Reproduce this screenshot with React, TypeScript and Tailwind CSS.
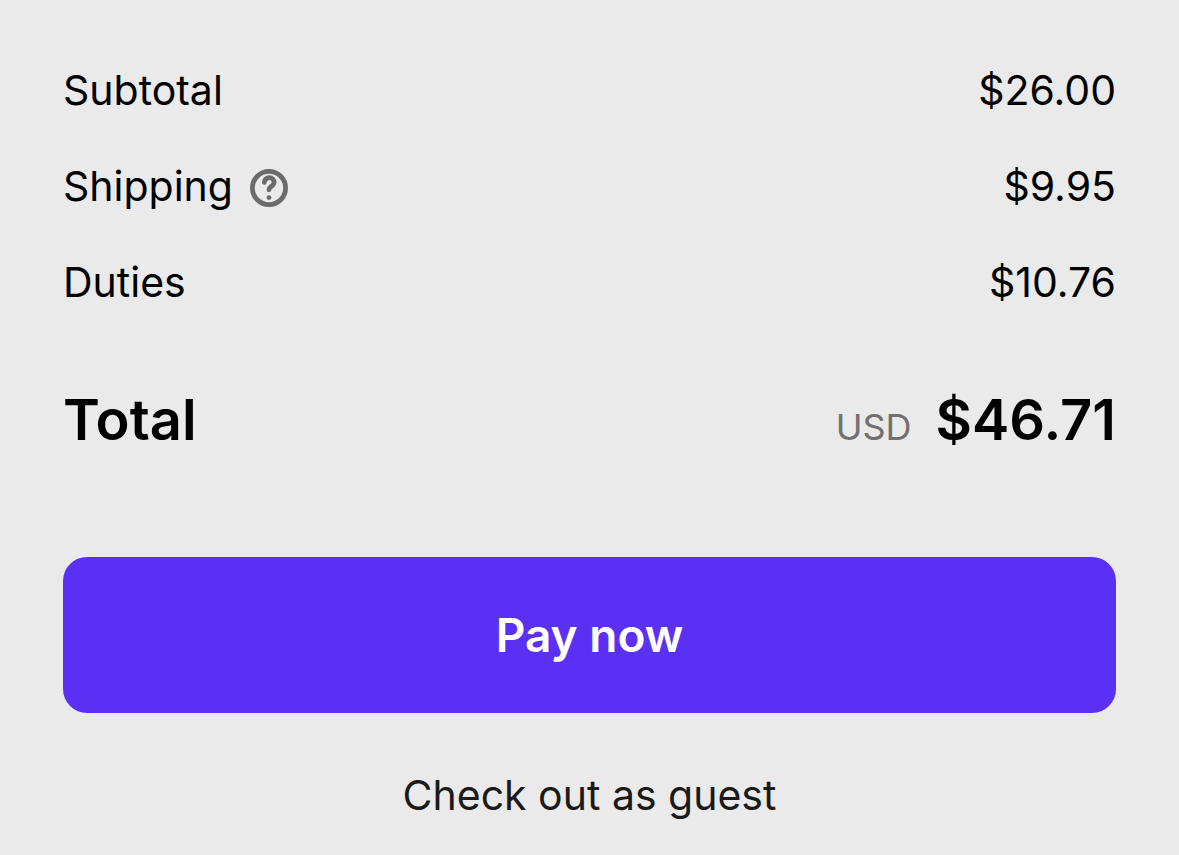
import React from 'react';

const lines = [
  { label: 'Subtotal', amount: '$26.00' },
  { label: 'Shipping', amount: '$9.95', help: true },
  { label: 'Duties', amount: '$10.76' },
];

function HelpIcon() {
  return (
    <svg viewBox="0 0 40 40" className="w-10 h-10" fill="none" stroke="#6b6b6b" strokeLinecap="round" strokeLinejoin="round" aria-hidden="true">
      <circle cx="20" cy="20" r="16.6" strokeWidth="4.8" />
      <path d="M15.3 14.4c.2-2.9 2.2-4.8 4.9-4.8 2.8 0 4.9 2 4.9 4.7 0 2.3-1.3 3.2-2.9 4.3-1.4 1-2.2 1.7-2.2 3.2" strokeWidth="4.8" />
      <circle cx="20" cy="29.6" r="2.4" fill="#6b6b6b" stroke="none" />
    </svg>
  );
}

export default function App() {
  return (
    <div className="min-h-screen bg-[#eaeaea] px-[63px] pt-15 pb-7 font-['Inter',sans-serif] text-black">
      <dl className="space-y-9 text-[41px] leading-[60px]">
        {lines.map((line) => (
          <div key={line.label} className="flex items-center justify-between">
            <dt className="flex items-center gap-4">
              {line.label}
              {line.help && (
                <button type="button" aria-label="Shipping information" className="pt-1">
                  <HelpIcon />
                </button>
              )}
            </dt>
            <dd>{line.amount}</dd>
          </div>
        ))}
      </dl>

      <div className="mt-17 flex items-baseline justify-between leading-[80px]">
        <span className="text-[56px] font-semibold">Total</span>
        <div className="flex items-baseline gap-6">
          <span className="text-[36px] text-[#707070]">USD</span>
          <strong className="text-[56px] font-semibold">$46.71</strong>
        </div>
      </div>

      <button type="button" className="mt-[90px] h-39 w-full rounded-3xl bg-[#5a31f4] text-[46px] font-semibold text-white">
        Pay now
      </button>

      <div className="mt-13 text-center text-[41px] leading-[60px] text-[#1a1a1a]">
        <a href="#">Check out as guest</a>
      </div>
    </div>
  );
}
